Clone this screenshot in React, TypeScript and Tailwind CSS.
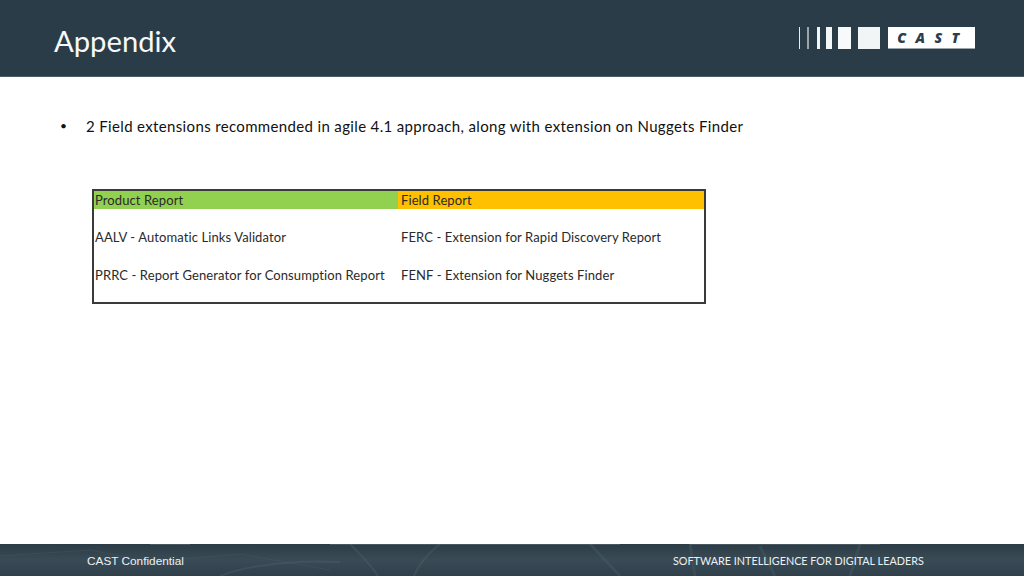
import React from 'react';

const Logo: React.FC = () => (
  <div className="flex h-[22px] items-stretch">
    <div className="w-px bg-[#e8edf0]" />
    <div className="ml-[7px] w-[2px] bg-[#9aa5ac]" />
    <div className="ml-[8px] w-[3px] bg-[#f2f5f6]" />
    <div className="ml-[6px] w-[6px] bg-[#f4f7f8]" />
    <div className="ml-[6px] w-[13px] bg-[#f7f9fa]" />
    <div className="ml-[7px] w-[22px] bg-[#f2f5f6]" />
    <div className="ml-[8px] flex w-[87px] items-center justify-center border-b border-[#9aa5ac] bg-white pl-[3px] font-['Open_Sans',sans-serif] text-[14px] font-extrabold italic leading-none tracking-[9.5px] text-[#2b3d4a]">
      CAST
    </div>
  </div>
);

const App: React.FC = () => {
  return (
    <div className="flex h-[576px] w-[1024px] flex-col overflow-hidden bg-white font-['Lato',sans-serif]">
      <header className="flex h-[77px] items-center justify-between border-b border-[#4c5c68] bg-[#2b3c49] pr-[49px] pl-[54px]">
        <h1 className="pt-[6px] text-[29.2px] leading-none tracking-[0.02px] text-[#f6f8f9]">Appendix</h1>
        <Logo />
      </header>

      <main className="flex-1">
        <div className="flex items-center pt-[39px] pl-[60px] text-[15px] leading-[20px] tracking-[0.35px] text-[#111]">
          <span className="w-[26px] text-[12px]">•</span>
          <span>2 Field extensions recommended in agile 4.1 approach, along with extension on Nuggets Finder</span>
        </div>

        <div className="mt-[53px] ml-[92px] h-[115px] w-[614px] border-2 border-[#3a3a3a] text-[13px] leading-[18px] tracking-[0.1px] text-[#2a2a2a]">
          <div className="grid h-[18px] grid-cols-[304px_1fr]">
            <div className="bg-[#92d050] pl-[1px]">Product Report</div>
            <div className="bg-[#ffc000] pl-[3px]">Field Report</div>
          </div>
          <div className="mt-[19px] grid grid-cols-[304px_1fr] gap-y-[20px]">
            <div className="pl-[1px]">AALV - Automatic Links Validator</div>
            <div className="pl-[3px]">FERC - Extension for Rapid Discovery Report</div>
            <div className="pl-[1px]">PRRC - Report Generator for Consumption Report</div>
            <div className="pl-[3px]">FENF - Extension for Nuggets Finder</div>
          </div>
        </div>
      </main>

      <footer className="relative flex h-[32px] items-center overflow-hidden bg-gradient-to-b from-[#2c3c46] via-[#394b56] to-[#2f404b] text-[#eef1f2]">
        <svg className="absolute inset-0" width="1024" height="32" viewBox="0 0 1024 32" fill="none">
          <path d="M0 12 L90 6 L150 18 L240 10 L330 26" stroke="#4d616c" strokeOpacity="0.3" />
          <path d="M350 0 C362 12 372 22 378 32 M440 0 C425 12 418 22 414 32 M220 32 C250 20 300 16 340 18" stroke="#5a6d78" strokeOpacity="0.28" strokeWidth="2" />
          <path d="M590 0 L620 32 M690 0 L695 32 M760 2 L775 32 M860 0 L850 32" stroke="#4f626d" strokeOpacity="0.3" strokeWidth="3" />
          <path d="M150 0 H190 M330 0 H620 M690 0 H880" stroke="#8b989f" strokeOpacity="0.6" />
        </svg>
        <span className="relative ml-[87px] w-[586px] pt-[4px] font-['Liberation_Sans',sans-serif] text-[11.8px] leading-none">
          CAST Confidential
        </span>
        <span className="relative pt-[2px] text-[10.8px] leading-none whitespace-nowrap">
          SOFTWARE INTELLIGENCE FOR DIGITAL LEADERS
        </span>
      </footer>
    </div>
  );
};

export default App;
